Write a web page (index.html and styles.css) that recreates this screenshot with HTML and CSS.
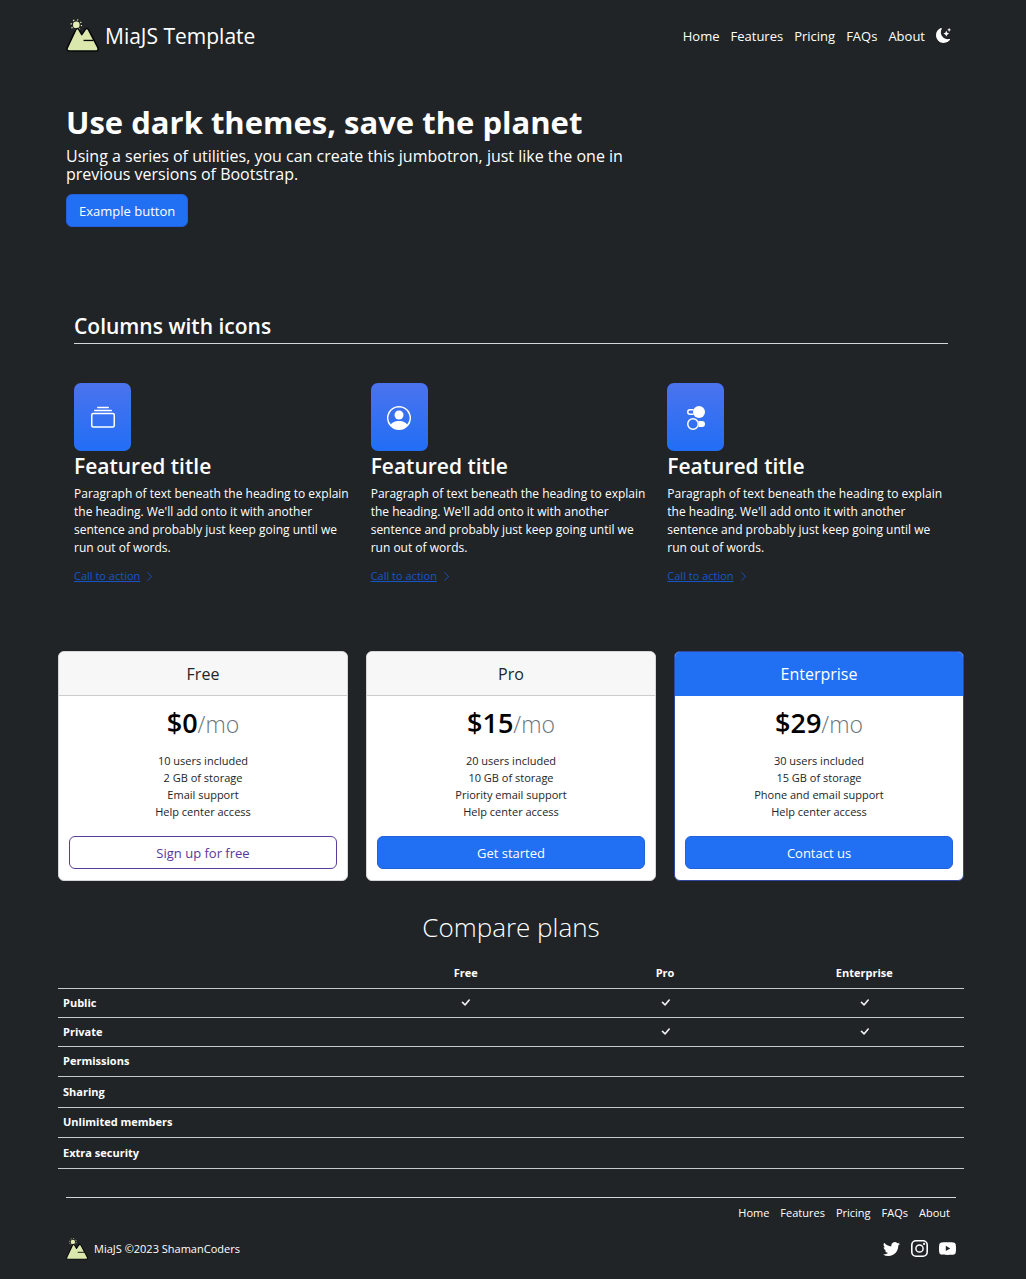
FILE: index.html
```html
<!DOCTYPE html>
<html lang="en">
<head>
<meta charset="utf-8">
<meta name="viewport" content="width=device-width, initial-scale=1">
<title>MiaJS Template</title>
<link rel="stylesheet" href="styles.css">
</head>
<body>
<svg class="sprite" aria-hidden="true">
  <symbol id="logo" viewBox="0 0 32 32">
    <circle cx="10" cy="5.700" r="5" fill="none" stroke="#e3edb5" stroke-width="1.200" stroke-dasharray="1.300 2.627"/>
    <circle cx="10" cy="5.700" r="3.200" fill="#e3edb5"/>
    <path d="M3.200 31Q.2 31 1.200 28L9.300 10.800Q11 7.800 12.800 10.800L15.300 15.200L18.500 10.400Q20.300 8 22 10.800L30.800 27.500Q32 31 28.800 31Z" fill="#dbe8ad" stroke="#050708" stroke-width="1.500" stroke-linejoin="round"/>
    <path d="M17 20.800H26.500" stroke="#050708" stroke-width="1.300"/>
  </symbol>
  <symbol id="moon" viewBox="0 0 16 16"><path d="M6 .278a.768.768 0 0 1 .08.858 7.208 7.208 0 0 0-.878 3.46c0 4.021 3.278 7.277 7.318 7.277.527 0 1.04-.055 1.533-.16a.787.787 0 0 1 .81.316.733.733 0 0 1-.031.893A8.349 8.349 0 0 1 8.344 16C3.734 16 0 12.286 0 7.71 0 4.266 2.114 1.312 5.124.06A.752.752 0 0 1 6 .278z"/><path d="M10.794 3.148a.217.217 0 0 1 .412 0l.387 1.162c.173.518.579.924 1.097 1.097l1.162.387a.217.217 0 0 1 0 .412l-1.162.387a1.734 1.734 0 0 0-1.097 1.097l-.387 1.162a.217.217 0 0 1-.412 0l-.387-1.162A1.734 1.734 0 0 0 9.31 6.593l-1.162-.387a.217.217 0 0 1 0-.412l1.162-.387a1.734 1.734 0 0 0 1.097-1.097l.387-1.162zM13.863.099a.145.145 0 0 1 .274 0l.258.774c.115.346.386.617.732.732l.774.258a.145.145 0 0 1 0 .274l-.774.258a1.156 1.156 0 0 0-.732.732l-.258.774a.145.145 0 0 1-.274 0l-.258-.774a1.156 1.156 0 0 0-.732-.732l-.774-.258a.145.145 0 0 1 0-.274l.774-.258c.346-.115.617-.386.732-.732L13.863.1z"/></symbol>
  <symbol id="collection" viewBox="0 0 16 16"><path d="M2.500 3.500a.5.5 0 0 1 0-1h11a.5.5 0 0 1 0 1h-11zm2-2a.5.5 0 0 1 0-1h7a.5.5 0 0 1 0 1h-7zM0 13a1.500 1.500 0 0 0 1.500 1.500h13A1.500 1.500 0 0 0 16 13V6a1.500 1.500 0 0 0-1.500-1.500h-13A1.500 1.500 0 0 0 0 6v7zm1.500.5A.5.5 0 0 1 1 13V6a.5.5 0 0 1 .5-.5h13a.5.5 0 0 1 .5.5v7a.5.5 0 0 1-.5.5h-13z"/></symbol>
  <symbol id="person" viewBox="0 0 16 16"><path d="M11 6a3 3 0 1 1-6 0 3 3 0 0 1 6 0z"/><path fill-rule="evenodd" d="M0 8a8 8 0 1 1 16 0A8 8 0 0 1 0 8zm8-7a7 7 0 0 0-5.468 11.37C3.242 11.226 4.805 10 8 10s4.757 1.225 5.468 2.37A7 7 0 0 0 8 1z"/></symbol>
  <symbol id="toggles" viewBox="0 0 16 16"><path d="M9.465 10H12a2 2 0 1 1 0 4H9.465c.34-.588.535-1.271.535-2 0-.729-.195-1.412-.535-2z"/><path d="M6 15a3 3 0 1 0 0-6 3 3 0 0 0 0 6zm0 1a4 4 0 1 1 0-8 4 4 0 0 1 0 8zm.535-10a3.975 3.975 0 0 1-.409-1H4a1 1 0 0 1 0-2h2.126c.091-.355.23-.69.41-1H4a2 2 0 1 0 0 4h2.535z"/><path d="M14 4a4 4 0 1 1-8 0 4 4 0 0 1 8 0z"/></symbol>
  <symbol id="chevron" viewBox="0 0 16 16"><path fill-rule="evenodd" d="M4.646 1.646a.5.5 0 0 1 .708 0l6 6a.5.5 0 0 1 0 .708l-6 6a.5.5 0 0 1-.708-.708L10.293 8 4.646 2.354a.5.5 0 0 1 0-.708z"/></symbol>
  <symbol id="check" viewBox="0 0 16 16"><path d="M12.736 3.970a.733.733 0 0 1 1.047 0c.286.289.29.756.01 1.050L7.880 12.010a.733.733 0 0 1-1.065.02L3.217 8.384a.757.757 0 0 1 0-1.060.733.733 0 0 1 1.047 0l3.052 3.093 5.400-6.425a.247.247 0 0 1 .02-.022Z"/></symbol>
  <symbol id="twitter" viewBox="0 0 16 16"><path d="M5.026 15c6.038 0 9.341-5.003 9.341-9.334 0-.14 0-.282-.006-.422A6.685 6.685 0 0 0 16 3.542a6.658 6.658 0 0 1-1.889.518 3.301 3.301 0 0 0 1.447-1.817 6.533 6.533 0 0 1-2.087.793A3.286 3.286 0 0 0 7.875 6.030a9.325 9.325 0 0 1-6.767-3.429 3.289 3.289 0 0 0 1.018 4.382A3.323 3.323 0 0 1 .64 6.575v.045a3.288 3.288 0 0 0 2.632 3.218 3.203 3.203 0 0 1-.865.115 3.230 3.230 0 0 1-.614-.057 3.283 3.283 0 0 0 3.067 2.277A6.588 6.588 0 0 1 .78 13.580a6.320 6.320 0 0 1-.78-.045A9.344 9.344 0 0 0 5.026 15z"/></symbol>
  <symbol id="instagram" viewBox="0 0 16 16"><path fill-rule="evenodd" d="M4.700 0H11.300A4.700 4.700 0 0 1 16 4.700V11.300A4.700 4.700 0 0 1 11.300 16H4.700A4.700 4.700 0 0 1 0 11.300V4.700A4.700 4.700 0 0 1 4.700 0ZM4.700 1.500A3.200 3.200 0 0 0 1.500 4.700V11.300A3.200 3.200 0 0 0 4.700 14.500H11.300A3.200 3.200 0 0 0 14.500 11.300V4.700A3.200 3.200 0 0 0 11.300 1.500ZM8 3.900A4.100 4.100 0 1 1 8 12.100A4.100 4.100 0 0 1 8 3.900ZM8 5.300A2.700 2.700 0 1 0 8 10.700A2.700 2.700 0 0 0 8 5.300Z"/><circle cx="12.300" cy="3.700" r="1"/></symbol>
  <symbol id="youtube" viewBox="0 0 16 16"><path fill-rule="evenodd" d="M8 2C11 2 13.400 2.100 14 2.300Q15.400 2.700 15.700 4.100C16 5.600 16 6.800 16 8S16 10.400 15.700 11.900Q15.400 13.300 14 13.700C13.400 13.900 11 14 8 14S2.600 13.900 2 13.700Q.6 13.300.3 11.900C0 10.400 0 9.200 0 8S0 5.600.3 4.100Q.6 2.700 2 2.300C2.600 2.100 5 2 8 2ZM6.400 5.500V10.400L10.600 8Z"/></symbol>
</svg>

<div class="page">
  <header class="site-header">
    <a class="brand" href="#"><svg class="brand-logo"><use href="#logo"/></svg>MiaJS Template</a>
    <nav class="nav" aria-label="Main">
      <a href="#">Home</a><a href="#">Features</a><a href="#">Pricing</a><a href="#">FAQs</a><a href="#">About</a>
      <button class="theme" type="button" aria-label="Toggle theme"><svg><use href="#moon"/></svg></button>
    </nav>
  </header>

  <main>
    <section class="hero">
      <h1>Use dark themes, save the planet</h1>
      <p>Using a series of utilities, you can create this jumbotron, just like the one in previous versions of Bootstrap.</p>
      <button class="btn btn-primary" type="button">Example button</button>
    </section>

    <section class="features">
      <h2>Columns with icons</h2>
      <div class="feature-grid">
        <article class="feature">
          <div class="tile"><svg><use href="#collection"/></svg></div>
          <h3>Featured title</h3>
          <p>Paragraph of text beneath the heading to explain the heading. We'll add onto it with another sentence and probably just keep going until we run out of words.</p>
          <a href="#">Call to action <svg><use href="#chevron"/></svg></a>
        </article>
        <article class="feature">
          <div class="tile"><svg><use href="#person"/></svg></div>
          <h3>Featured title</h3>
          <p>Paragraph of text beneath the heading to explain the heading. We'll add onto it with another sentence and probably just keep going until we run out of words.</p>
          <a href="#">Call to action <svg><use href="#chevron"/></svg></a>
        </article>
        <article class="feature">
          <div class="tile"><svg><use href="#toggles"/></svg></div>
          <h3>Featured title</h3>
          <p>Paragraph of text beneath the heading to explain the heading. We'll add onto it with another sentence and probably just keep going until we run out of words.</p>
          <a href="#">Call to action <svg><use href="#chevron"/></svg></a>
        </article>
      </div>
    </section>

    <section class="plans">
      <article class="card">
        <h3>Free</h3>
        <div class="card-body">
          <p class="price">$0<small>/mo</small></p>
          <ul><li>10 users included</li><li>2 GB of storage</li><li>Email support</li><li>Help center access</li></ul>
          <button class="btn btn-outline" type="button">Sign up for free</button>
        </div>
      </article>
      <article class="card">
        <h3>Pro</h3>
        <div class="card-body">
          <p class="price">$15<small>/mo</small></p>
          <ul><li>20 users included</li><li>10 GB of storage</li><li>Priority email support</li><li>Help center access</li></ul>
          <button class="btn btn-primary" type="button">Get started</button>
        </div>
      </article>
      <article class="card card-primary">
        <h3>Enterprise</h3>
        <div class="card-body">
          <p class="price">$29<small>/mo</small></p>
          <ul><li>30 users included</li><li>15 GB of storage</li><li>Phone and email support</li><li>Help center access</li></ul>
          <button class="btn btn-primary" type="button">Contact us</button>
        </div>
      </article>
    </section>

    <section class="compare">
      <h2>Compare plans</h2>
      <table>
        <thead>
          <tr><td></td><th scope="col">Free</th><th scope="col">Pro</th><th scope="col">Enterprise</th></tr>
        </thead>
        <tbody>
          <tr><th scope="row">Public</th><td><svg><use href="#check"/></svg></td><td><svg><use href="#check"/></svg></td><td><svg><use href="#check"/></svg></td></tr>
          <tr><th scope="row">Private</th><td></td><td><svg><use href="#check"/></svg></td><td><svg><use href="#check"/></svg></td></tr>
        </tbody>
        <tbody class="roomy">
          <tr><th scope="row">Permissions</th><td></td><td></td><td></td></tr>
          <tr><th scope="row">Sharing</th><td></td><td></td><td></td></tr>
          <tr><th scope="row">Unlimited members</th><td></td><td></td><td></td></tr>
          <tr><th scope="row">Extra security</th><td></td><td></td><td></td></tr>
        </tbody>
      </table>
    </section>
  </main>

  <footer class="site-footer">
    <nav class="footer-nav" aria-label="Footer">
      <a href="#">Home</a><a href="#">Features</a><a href="#">Pricing</a><a href="#">FAQs</a><a href="#">About</a>
    </nav>
    <div class="footer-row">
      <div class="copyright"><svg><use href="#logo"/></svg>MiaJS ©2023 ShamanCoders</div>
      <div class="social">
        <a href="#" aria-label="Twitter"><svg><use href="#twitter"/></svg></a>
        <a href="#" aria-label="Instagram"><svg><use href="#instagram"/></svg></a>
        <a href="#" aria-label="YouTube"><svg><use href="#youtube"/></svg></a>
      </div>
    </div>
  </footer>
</div>
</body>
</html>
```
FILE: styles.css
```css
* { box-sizing: border-box; }

body {
  margin: 0;
  background: #212427;
  color: #fff;
  font: 13px/18px "Open Sans", "Noto Sans", sans-serif;
}

h1, h2, h3, p, ul { margin: 0; padding: 0; }
ul { list-style: none; }
a { color: inherit; text-decoration: none; }
svg { display: block; fill: currentColor; }
.sprite { display: none; }

.page { padding: 0 62px 0 58px; }

.site-header {
  display: flex;
  justify-content: space-between;
  align-items: center;
  height: 71px;
  padding: 0 13px 0 8px;
}
.brand { display: flex; align-items: center; gap: 6px; font-size: 21px; line-height: 32px; }
.brand-logo { width: 33px; height: 33px; }
.nav { display: flex; align-items: center; gap: 11px; }
.theme { border: 0; padding: 0; background: none; color: inherit; }
.theme svg { width: 15px; height: 15px; }

.hero { padding: 29px 8px 84px; }
.hero h1 { font-size: 31px; line-height: 44px; font-weight: 700; }
.hero p { max-width: 580px; margin: 3px 0 11px; font-size: 16px; line-height: 18px; }

.btn {
  height: 33px;
  padding: 0 12px;
  border: 1px solid #2460d8;
  border-radius: 6px;
  font: inherit;
}
.btn-primary { background: #216ff3; color: #fff; }
.btn-outline { background: #fff; border-color: #5a3d9a; color: #56379c; }

.features { padding: 0 16px 66px; }
.features h2 {
  height: 33px;
  border-bottom: 1px solid #d5d6d7;
  font-size: 21px;
  line-height: 30px;
  font-weight: 600;
}
.feature-grid { display: grid; grid-template-columns: repeat(3, 1fr); gap: 16px; padding-top: 39px; }
.tile {
  display: grid;
  place-items: center;
  width: 57px;
  height: 68px;
  padding-top: 2px;
  border-radius: 7px;
  background: linear-gradient(#4b73ee, #216ef5);
}
.tile svg { width: 24px; height: 24px; }
.feature h3 { font-size: 21px; line-height: 30px; font-weight: 600; }
.feature p { margin: 4px 0 9px; font-size: 12px; line-height: 18px; }
.feature a { display: inline-flex; align-items: center; gap: 4px; color: #1456c8; font-size: 11px; line-height: 18px; text-decoration: underline; }
.feature a svg { width: 11px; height: 11px; }

.plans { display: grid; grid-template-columns: repeat(3, 1fr); gap: 18px; text-align: center; }
.card { overflow: hidden; border: 1px solid #d5d5d5; border-radius: 6px; background: #fff; color: #212529; }
.card h3 { height: 44px; border-bottom: 1px solid #ccc; background: #f7f7f7; font-size: 16px; line-height: 44px; font-weight: 400; }
.card-body { padding: 9px 10px 11px; }
.price { color: #000; font-size: 27px; line-height: 36px; font-weight: 600; }
.price small { color: #6c757d; font-size: 23px; font-weight: 300; }
.card ul { padding: 10px 0 16px; font-size: 11px; line-height: 17px; }
.card .btn { width: 100%; }
.card-primary { border-color: #32479f; }
.card-primary h3 { border-color: #216ff3; background: #216ff3; color: #fff; }

.compare h2 { padding: 27px 0 13px; font-size: 26px; line-height: 38px; font-weight: 300; text-align: center; }
.compare table { width: 100%; table-layout: fixed; border-collapse: collapse; font-size: 11px; line-height: 18px; text-align: center; }
.compare th, .compare td { width: 22%; height: 29px; padding: 0 5px; border-bottom: 1px solid #c8c9ca; font-weight: 700; }
.compare tr > :first-child { width: 34%; text-align: left; }
.compare .roomy th, .compare .roomy td { height: 30px; }
.compare .roomy tr:nth-child(even) > * { height: 31px; }
.compare td svg { width: 11px; height: 11px; margin: 0 auto; stroke: currentColor; stroke-width: 1px; }

.site-footer { margin: 28px 8px 0; border-top: 1px solid #d5d6d7; font-size: 11px; }
.footer-nav { display: flex; justify-content: flex-end; gap: 11px; padding: 6px 6px 0 0; }
.footer-row { display: flex; justify-content: space-between; align-items: center; padding: 16px 0 20px; }
.copyright { display: flex; align-items: center; gap: 6px; }
.copyright svg { width: 22px; height: 22px; }
.social { display: flex; gap: 11px; }
.social svg { width: 17px; height: 17px; }
```
